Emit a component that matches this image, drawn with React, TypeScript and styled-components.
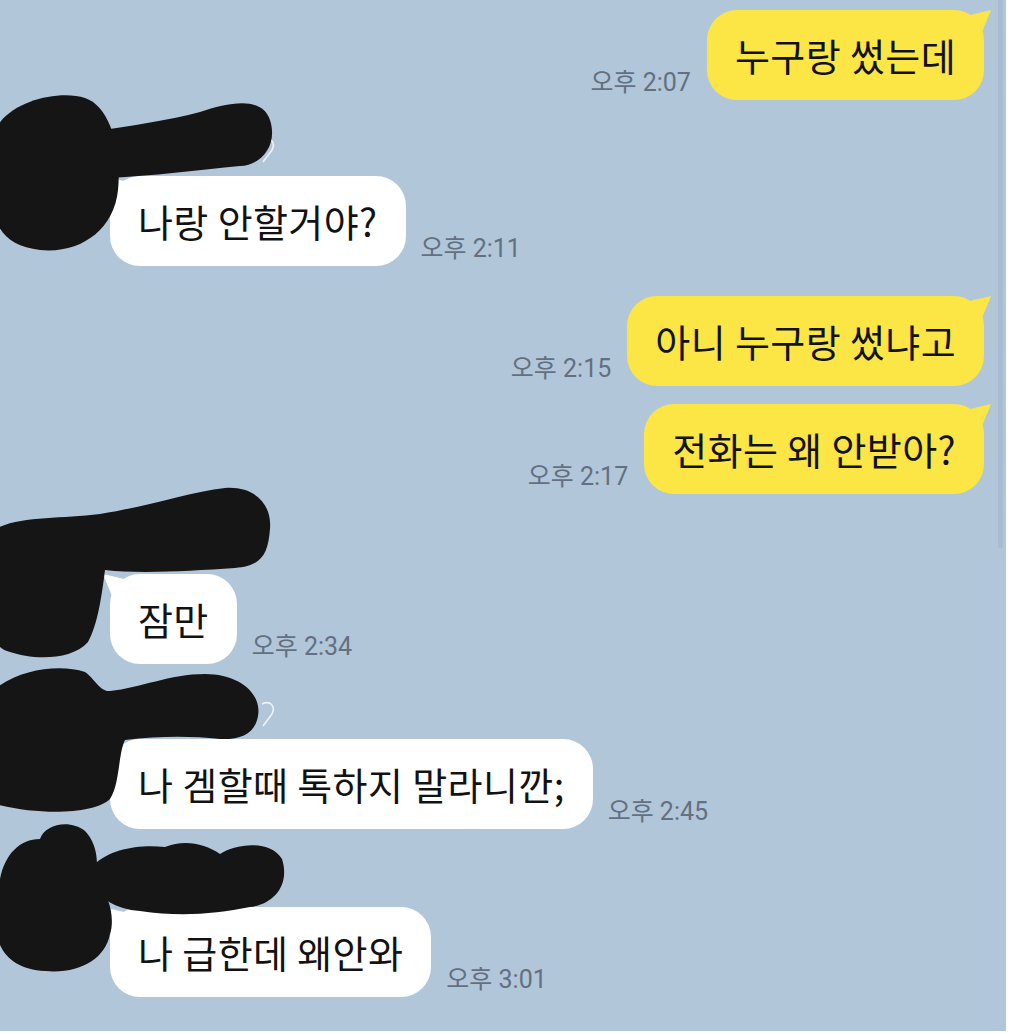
import React from 'react';
import styled, { createGlobalStyle, css } from 'styled-components';

type Msg = {
    kind: 'out' | 'in';
    text: string;
    time: string;
    space: number;
    blob?: number;
};

const messages: Msg[] = [
    { kind: 'out', text: '누구랑 썼는데', time: '오후 2:07', space: 10 },
    { kind: 'in', text: '나랑 안할거야?', time: '오후 2:11', space: 76, blob: 0 },
    { kind: 'out', text: '아니 누구랑 썼냐고', time: '오후 2:15', space: 30 },
    { kind: 'out', text: '전화는 왜 안받아?', time: '오후 2:17', space: 18 },
    { kind: 'in', text: '잠만', time: '오후 2:34', space: 80, blob: 1 },
    { kind: 'in', text: '나 겜할때 톡하지 말라니깐;', time: '오후 2:45', space: 75, blob: 2 },
    { kind: 'in', text: '나 급한데 왜안와', time: '오후 3:01', space: 78, blob: 3 },
];

// redaction scribbles over avatar + name, in a 290x180 box starting 10px above the group
const blobs: { paths: string[]; heart?: boolean }[] = [
    {
        paths: [
            'M -5 40 C 10 10, 60 0, 85 8 C 110 16, 122 60, 118 100 C 114 140, 80 164, 40 160 C 10 157, -5 140, -5 120 Z',
            'M 90 42 C 130 36, 170 30, 200 22 C 230 12, 262 6, 270 30 C 278 55, 262 75, 240 76 C 200 80, 150 86, 110 88 Z',
        ],
        heart: true,
    },
    {
        paths: [
            'M -5 45 C 20 32, 60 35, 100 30 C 150 22, 190 8, 225 4 C 255 2, 272 20, 270 45 C 268 70, 262 82, 235 84 C 190 87, 140 90, 105 86 C 102 110, 98 140, 88 158 C 70 178, 30 175, 10 168 C 0 165, -5 160, -5 150 Z',
        ],
    },
    {
        paths: [
            'M -5 35 C 20 15, 60 10, 85 18 C 95 25, 100 38, 110 37 C 140 34, 170 20, 205 20 C 240 20, 262 40, 258 62 C 255 80, 240 86, 220 85 C 190 82, 160 82, 125 86 C 118 100, 120 130, 110 145 C 95 160, 40 162, -5 150 Z',
        ],
        heart: true,
    },
    {
        paths: [
            'M 0 60 C 5 35, 20 20, 40 20 C 45 5, 70 0, 85 12 C 95 22, 100 40, 95 60 C 110 75, 115 100, 110 115 C 105 140, 80 155, 45 152 C 10 150, -5 130, -5 100 Z',
            'M 95 45 C 110 30, 140 25, 165 28 C 185 20, 205 25, 220 35 C 235 25, 270 20, 282 40 C 290 65, 275 85, 250 88 C 215 95, 180 98, 140 92 C 115 90, 100 80, 95 65 Z',
        ],
    },
];

const GlobalStyle = createGlobalStyle`
    html, body {
        margin: 0;
        padding: 0;
        background: #ffffff;
    }
`;

const ChatRoom = styled.main`
    position: relative;
    width: 1006px;
    height: 1031px;
    overflow: hidden;
    background: #b2c6da;
    display: flex;
    flex-direction: column;
    font-family: "Noto Sans CJK KR", "Noto Sans", sans-serif;
`;

const ScrollThumb = styled.div`
    position: absolute;
    top: 0;
    right: 3px;
    width: 5px;
    height: 548px;
    background: rgba(120, 145, 170, 0.18);
`;

const OutRow = styled.div<{ $space: number }>`
    display: flex;
    flex-direction: row;
    justify-content: flex-end;
    align-items: flex-end;
    gap: 16px;
    padding-right: 22px;
    margin-top: ${(p) => p.$space}px;
`;

const InGroup = styled.section<{ $space: number }>`
    position: relative;
    display: flex;
    flex-direction: column;
    padding-top: ${(p) => p.$space}px;
`;

const InRow = styled.div`
    display: flex;
    flex-direction: row;
    align-items: flex-end;
    gap: 15px;
    padding-left: 110px;
`;

const Bubble = styled.div<{ $mine?: boolean }>`
    position: relative;
    box-sizing: border-box;
    height: 90px;
    padding: 0 28px;
    display: flex;
    align-items: center;
    border-radius: 30px;
    font-size: 38px;
    letter-spacing: 0.4px;
    line-height: 46px;
    color: #121212;
    white-space: nowrap;
    background: ${(p) => (p.$mine ? '#fbe645' : '#ffffff')};

    &::before {
        content: '';
        position: absolute;
        top: 0;
        width: 20px;
        height: 22px;
        background: inherit;
        ${(p) =>
            p.$mine
                ? css`
                      right: -7px;
                      clip-path: polygon(0 22%, 100% 0, 55% 100%, 0 100%);
                  `
                : css`
                      left: -7px;
                      clip-path: polygon(100% 22%, 0 0, 45% 100%, 100% 100%);
                  `}
    }
`;

const Time = styled.span`
    font-family: "Roboto", "Noto Sans CJK KR", sans-serif;
    font-size: 25px;
    line-height: 25px;
    color: #627080;
    margin-bottom: 5px;
    white-space: nowrap;
`;

const Scribble = styled.svg`
    position: absolute;
    top: -10px;
    left: 0;
    width: 290px;
    height: 180px;
    z-index: 1;
    overflow: visible;
`;

function Redaction({ index }: { index: number }) {
    const b = blobs[index];
    return (
        <Scribble viewBox="0 0 290 180">
            {b.heart && (
                <path
                    d="M 262 50 C 270 46, 276 52, 272 60 L 263 72"
                    fill="none"
                    stroke="#eef2f7"
                    strokeWidth="1.6"
                />
            )}
            {b.paths.map((d, i) => (
                <path key={i} d={d} fill="#151515" />
            ))}
        </Scribble>
    );
}

export default function App() {
    return (
        <>
            <GlobalStyle />
            <ChatRoom>
                {messages.map((m, i) =>
                    m.kind === 'out' ? (
                        <OutRow key={i} $space={m.space}>
                            <Time>{m.time}</Time>
                            <Bubble $mine>{m.text}</Bubble>
                        </OutRow>
                    ) : (
                        <InGroup key={i} $space={m.space}>
                            <Redaction index={m.blob ?? 0} />
                            <InRow>
                                <Bubble>{m.text}</Bubble>
                                <Time>{m.time}</Time>
                            </InRow>
                        </InGroup>
                    )
                )}
                <ScrollThumb />
            </ChatRoom>
        </>
    );
}
